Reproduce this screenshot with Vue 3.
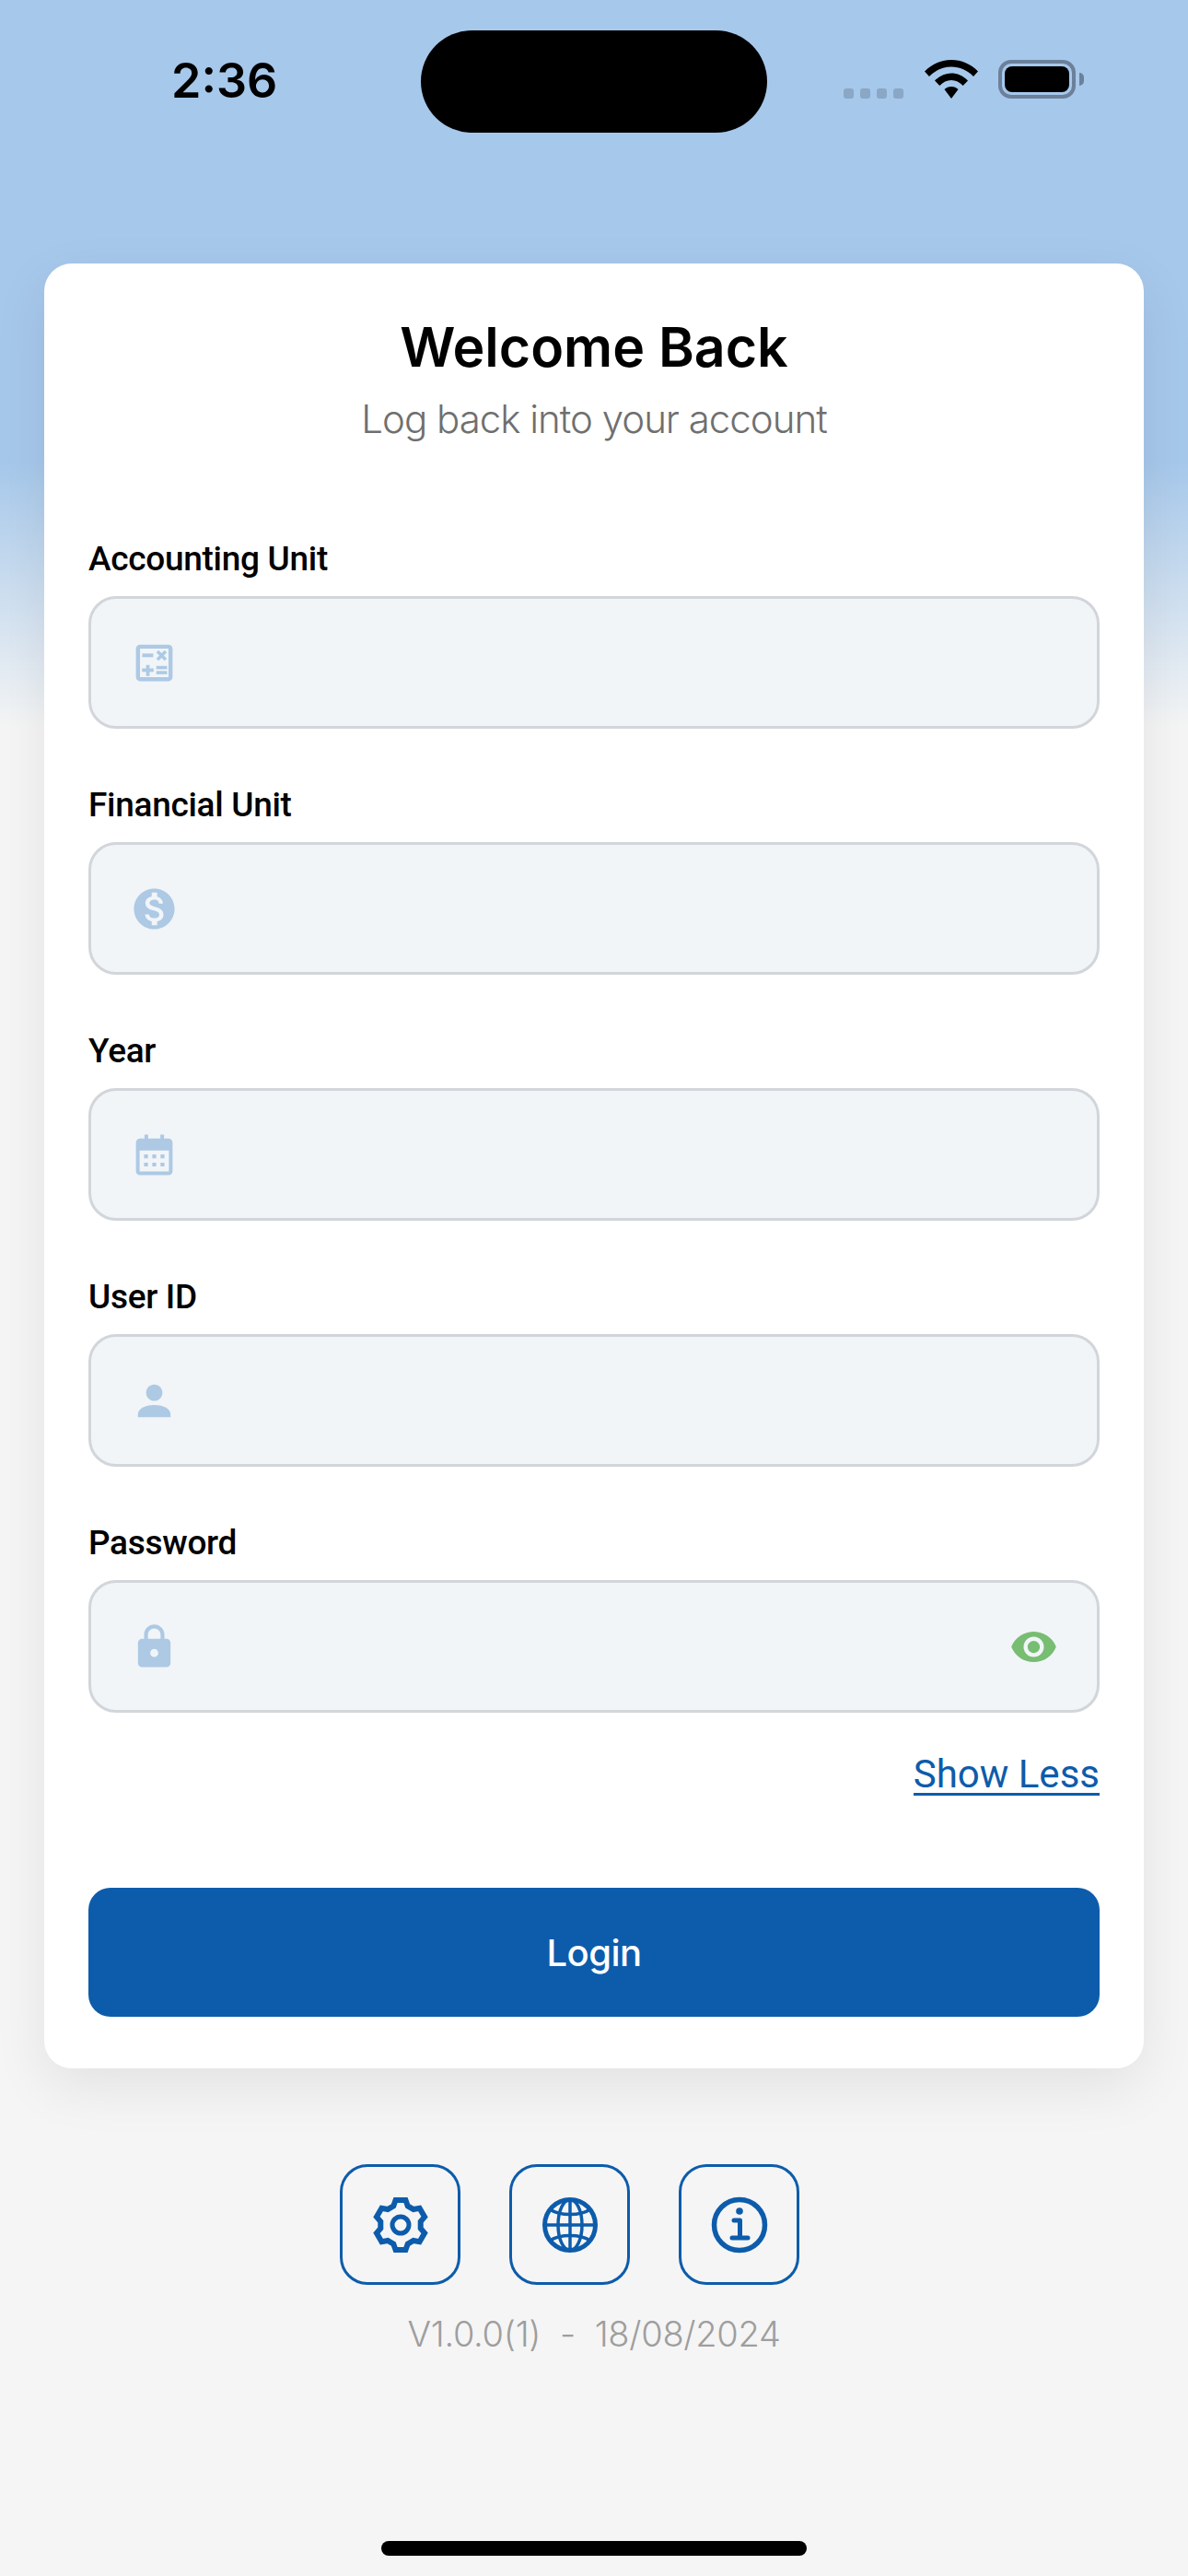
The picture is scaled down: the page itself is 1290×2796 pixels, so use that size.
<template>
  <div class="screen">
    <!-- Status bar -->
    <div class="status-bar">
      <span class="time">2:36</span>
      <div class="island"></div>
      <div class="status-icons">
        <div class="signal"><i v-for="n in 4" :key="n"></i></div>
        <svg class="wifi" width="58" height="42" viewBox="0 0 58 42">
          <path d="M29 0C18 0 8 4.300 0 12.500L5 18C11.500 11.300 19.800 7.500 29 7.500S46.500 11.300 53 18L58 12.500C50 4.300 40 0 29 0Z" />
          <path d="M29 14.500C22.500 14.500 16.500 17 11 22.500L16.300 28C20 24.200 24.300 22 29 22S38 24.200 41.700 28L47 22.500C41.500 17 35.500 14.500 29 14.500Z" />
          <path d="M29 29C26 29 23.500 30 21.500 32L29 42L36.500 32C34.500 30 32 29 29 29Z" />
        </svg>
        <div class="battery"><div class="battery-fill"></div></div>
        <div class="battery-cap"></div>
      </div>
    </div>

    <!-- Login card -->
    <main class="card">
      <h1 class="title">Welcome Back</h1>
      <p class="subtitle">Log back into your account</p>

      <form class="fields" @submit.prevent>
        <div v-for="field in fields" :key="field.label" class="field">
          <label class="field-label">{{ field.label }}</label>
          <div class="input-box">
            <svg class="field-icon" width="53" height="53" viewBox="0 0 24 24">
              <path v-for="d in field.paths" :key="d" :d="d" fill-rule="evenodd" />
            </svg>
            <input class="input" :type="field.type" />
            <svg v-if="field.type === 'password'" class="eye" width="53" height="53" viewBox="0 0 24 24">
              <path fill-rule="evenodd" d="M12 4.500C7 4.500 2.730 7.610 1 12c1.730 4.390 6 7.500 11 7.500s9.270-3.110 11-7.500c-1.730-4.390-6-7.500-11-7.500zM12 17c-2.760 0-5-2.240-5-5s2.240-5 5-5 5 2.240 5 5-2.240 5-5 5zm0-8c-1.660 0-3 1.340-3 3s1.340 3 3 3 3-1.340 3-3-1.340-3-3-3z" />
            </svg>
          </div>
        </div>
      </form>

      <div class="show-row"><a class="show-less">Show Less</a></div>
      <button class="login" type="button">Login</button>
    </main>

    <!-- Footer actions -->
    <div class="actions">
      <button class="action" type="button" aria-label="Settings">
        <svg width="64" height="64" viewBox="0 0 64 64" fill="none" stroke="#0d5cab" stroke-width="6" stroke-linejoin="miter">
          <path :d="gearPath" />
          <circle cx="32" cy="32" r="9" stroke-width="5" />
        </svg>
      </button>
      <button class="action" type="button" aria-label="Language">
        <svg width="64" height="64" viewBox="0 0 64 64" fill="none" stroke="#0d5cab" stroke-width="3.500">
          <circle cx="32" cy="32" r="27.500" stroke-width="5" />
          <ellipse cx="32" cy="32" rx="13" ry="27.500" />
          <path d="M32 4v56M4 32h56" />
          <path d="M10 15c6 4 14 5.500 22 5.500S48 19 54 15M10 49c6-4 14-5.500 22-5.500S48 45 54 49" />
        </svg>
      </button>
      <button class="action" type="button" aria-label="About">
        <svg width="64" height="64" viewBox="0 0 64 64" fill="none" stroke="#0d5cab" stroke-width="5.500">
          <circle cx="32" cy="32" r="27.500" />
          <circle cx="32" cy="17" r="3.800" fill="#0d5cab" stroke="none" />
          <path d="M26 27h6.500v18M24 46h17" stroke-width="5" stroke-linecap="round" stroke-linejoin="round" />
        </svg>
      </button>
    </div>
    <p class="version">V1.0.0(1)&nbsp; -&nbsp; 18/08/2024</p>

    <div class="home-indicator"></div>
  </div>
</template>

<script setup>
// Data
const fields = [
  {
    label: 'Accounting Unit',
    type: 'text',
    paths: [
      'M19 3H5c-1.100 0-2 .9-2 2v14c0 1.100.9 2 2 2h14c1.100 0 2-.9 2-2V5c0-1.100-.9-2-2-2zm0 16H5V5h14v14z',
      'M6.100 7.400h5.400v1.800H6.100z',
      'M15.600 7.300l1.500-1.500 1.100 1.100-1.500 1.500 1.500 1.500-1.100 1.100-1.500-1.500-1.500 1.500-1.100-1.100 1.500-1.500-1.500-1.500 1.100-1.100z',
      'M8 13h1.700v1.700h2v1.700h-2v2H8v-2H6v-1.700h2z',
      'M13 13.500h5.300v1.600H13z',
      'M13 16h5.300v1.600H13z'
    ]
  },
  {
    label: 'Financial Unit',
    type: 'text',
    paths: [
      'M12 2C6.480 2 2 6.480 2 12s4.480 10 10 10 10-4.480 10-10S17.520 2 12 2zm1.410 16.090V20h-2.670v-1.930c-1.710-.36-3.160-1.460-3.270-3.400h1.960c.1 1.050.82 1.870 2.650 1.870 1.960 0 2.400-.98 2.400-1.590 0-.83-.44-1.610-2.670-2.140-2.480-.6-4.180-1.620-4.180-3.670 0-1.720 1.390-2.840 3.110-3.210V4h2.670v1.950c1.860.45 2.790 1.860 2.850 3.390H14.300c-.05-1.110-.64-1.870-2.220-1.870-1.500 0-2.400.68-2.400 1.640 0 .84.65 1.390 2.670 1.910s4.180 1.390 4.180 3.910c-.01 1.830-1.380 2.830-3.120 3.160z'
    ]
  },
  {
    label: 'Year',
    type: 'text',
    paths: [
      'M7.200 2h1.800v2h6V2h1.800v2H19c1.100 0 2 .9 2 2v14c0 1.100-.9 2-2 2H5c-1.100 0-2-.9-2-2V6c0-1.100.9-2 2-2h2.200zM4.800 9.800V20.200h14.400V9.800zM7 11.800h1.900v1.900H7zM11.050 11.800h1.900v1.900h-1.900zM15.100 11.800H17v1.900h-1.900zM7 15.800h1.900v1.900H7zM11.050 15.800h1.900v1.900h-1.900zM15.100 15.800H17v1.900h-1.900z'
    ]
  },
  {
    label: 'User ID',
    type: 'text',
    paths: [
      'M12 12c2.210 0 4-1.790 4-4s-1.790-4-4-4-4 1.790-4 4 1.790 4 4 4z',
      'M4 20v-1.400C4 15.500 8 14 12 14s8 1.500 8 4.600V20z'
    ]
  },
  {
    label: 'Password',
    type: 'password',
    paths: [
      'M18 8h-1V6c0-2.760-2.240-5-5-5S7 3.240 7 6v2H6c-1.100 0-2 .9-2 2v10c0 1.100.9 2 2 2h12c1.100 0 2-.9 2-2V10c0-1.100-.9-2-2-2zm-6 9c-1.100 0-2-.9-2-2s.9-2 2-2 2 .9 2 2-.9 2-2 2zm3.100-9H8.900V6c0-1.710 1.390-3.100 3.100-3.100 1.710 0 3.100 1.390 3.100 3.100v2z'
    ]
  }
]

// Six tooth cog, teeth at top and bottom
const gearPath = (() => {
  const points = []
  const pt = (r, t) => `${(32 + r * Math.cos(t)).toFixed(2)} ${(32 + r * Math.sin(t)).toFixed(2)}`
  for (let i = 0; i < 6; i++) {
    const a = (i * Math.PI) / 3 - Math.PI / 2
    points.push(pt(22, a - 0.36), pt(27.5, a - 0.2), pt(27.5, a + 0.2), pt(22, a + 0.36))
  }
  return `M${points.join('L')}Z`
})()
</script>

<style scoped>
.screen {
  position: relative;
  display: flex;
  flex-direction: column;
  align-items: center;
  width: 1290px;
  height: 2796px;
  overflow: hidden;
  font-family: Inter, "Liberation Sans", sans-serif;
  background: linear-gradient(180deg, #a6c8eb 0, #a6c8eb 500px, #f5f5f5 790px, #f5f5f5 100%);
}

.status-bar {
  position: relative;
  flex: none;
  display: flex;
  align-items: flex-start;
  justify-content: space-between;
  width: 100%;
  height: 286px;
  padding: 62px 113px 0 186px;
  box-sizing: border-box;
}

.time {
  font-size: 52px;
  line-height: 52px;
  font-weight: 600;
  color: #000;
}

.island {
  position: absolute;
  left: 457px;
  top: 33px;
  width: 376px;
  height: 111px;
  border-radius: 56px;
  background: #000;
}

.status-icons {
  display: flex;
  align-items: flex-end;
  margin-top: 3px;
}

.signal {
  display: flex;
  gap: 7px;
  margin-right: 23px;
}

.signal i {
  width: 11px;
  height: 11px;
  border-radius: 3px;
  background: #8aa7c6;
}

.wifi {
  fill: #000;
  margin-right: 22px;
}

.battery {
  width: 84px;
  height: 42px;
  padding: 3px;
  border-radius: 14px;
  border: 4px solid #6c809b;
  box-sizing: border-box;
}

.battery-fill {
  width: 100%;
  height: 100%;
  border-radius: 8px;
  background: #000;
}

.battery-cap {
  width: 5px;
  height: 14px;
  margin: 0 0 14px 4px;
  border-radius: 0 5px 5px 0;
  background: #6c809b;
}

.card {
  flex: none;
  width: 1194px;
  padding: 55px 48px 56px;
  box-sizing: border-box;
  background: #fff;
  border-radius: 30px;
  box-shadow: 0 20px 60px rgba(0, 0, 0, 0.08);
}

.title {
  margin: 0;
  font-size: 59px;
  line-height: 72px;
  font-weight: 600;
  text-align: center;
  color: #000;
}

.subtitle {
  margin: 16px 0 0;
  font-size: 42px;
  line-height: 52px;
  font-weight: 300;
  letter-spacing: -1px;
  text-align: center;
  color: #6f6f6f;
}

.fields {
  display: flex;
  flex-direction: column;
  gap: 57px;
  margin-top: 100px;
}

.field-label {
  display: block;
  height: 66px;
  font-family: Roboto, Inter, sans-serif;
  font-size: 37px;
  line-height: 52px;
  font-weight: 500;
  letter-spacing: -0.3px;
  color: #000;
}

.input-box {
  display: flex;
  align-items: center;
  gap: 24px;
  height: 144px;
  padding: 0 42px;
  box-sizing: border-box;
  border: 3px solid #d2d6da;
  border-radius: 30px;
  background: #f1f5f8;
}

.field-icon {
  flex: none;
  fill: #adc9e4;
}

.eye {
  flex: none;
  fill: #77bd72;
}

.input {
  flex: 1;
  min-width: 0;
  border: 0;
  outline: 0;
  background: transparent;
  font-size: 40px;
}

.show-row {
  display: flex;
  justify-content: flex-end;
  margin-top: 47px;
}

.show-less {
  font-family: Roboto, "Liberation Sans", sans-serif;
  font-size: 42px;
  line-height: 40px;
  color: #0d5cab;
  border-bottom: 3px solid #0d5cab;
}

.login {
  display: block;
  width: 100%;
  height: 140px;
  margin-top: 100px;
  border: 0;
  border-radius: 24px;
  background: #0d5cab;
  font-family: inherit;
  font-size: 40px;
  font-weight: 500;
  letter-spacing: -0.5px;
  color: #fff;
}

.actions {
  display: flex;
  gap: 53px;
  margin-top: 104px;
  margin-right: 53px;
}

.action {
  display: flex;
  align-items: center;
  justify-content: center;
  width: 131px;
  height: 131px;
  padding: 0;
  border: 3px solid #0d5cab;
  border-radius: 30px;
  background: transparent;
}

.version {
  margin: 30px 0 0;
  font-size: 38px;
  line-height: 46px;
  font-weight: 300;
  letter-spacing: -0.3px;
  color: #9e9e9e;
}

.home-indicator {
  position: absolute;
  left: 414px;
  bottom: 22px;
  width: 462px;
  height: 16px;
  border-radius: 8px;
  background: #000;
}
</style>
